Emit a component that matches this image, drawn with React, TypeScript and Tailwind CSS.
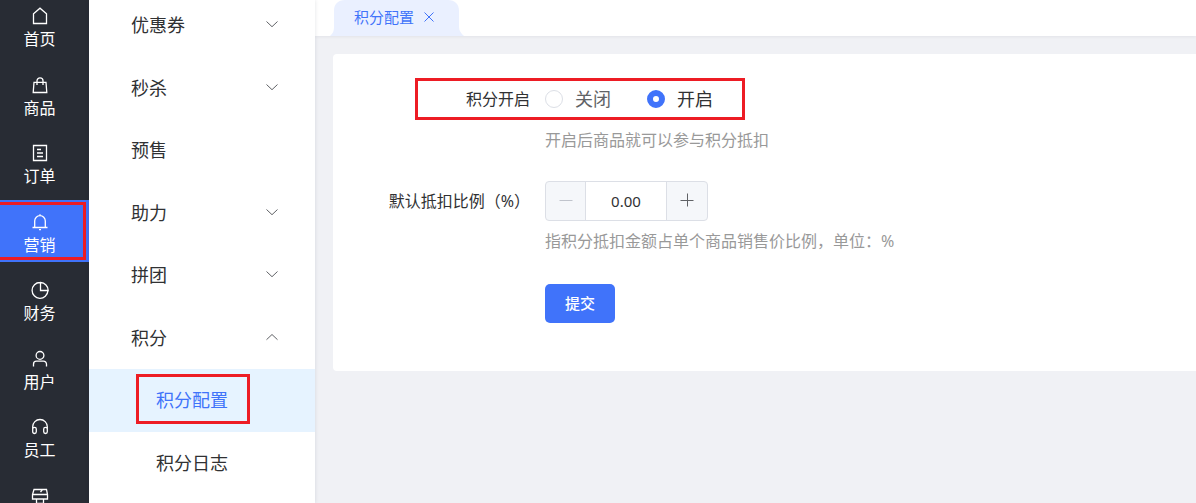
import { useState, type ReactNode } from 'react';

const railItems: { label: string; icon: ReactNode; iconOnly?: boolean }[] = [
  { label: '首页', icon: <path d="M2.500 16.500V6.800L9 1.200l6.500 5.600v9.700z" /> },
  { label: '商品', icon: <path d="M3 6.300h12l.8 10.200H2.200zM6 9V4.800a3 3 0 0 1 6 0V9" /> },
  { label: '订单', icon: <path d="M2.500 1.500h13v15h-13zM6 5.500h4M6 9h6M6 12.500h6" /> },
  { label: '营销', icon: <path d="M1.500 14.500h15M3.700 14.500V8a5.300 5.300 0 0 1 10.600 0v6.500M9 2.700V1.200M8 16.600h2" /> },
  { label: '财务', icon: <path d="M9 1.500a7.900 7.900 0 1 0 7.900 8.400M9.500 1.500v8h7.700a8 8 0 0 0-7.700-8z" /> },
  { label: '用户', icon: <path d="M9 1.500a3.900 3.900 0 1 1 0 7.800 3.900 3.900 0 0 1 0-7.800zM2.500 16.500v-2.300a3 3 0 0 1 3-3h7a3 3 0 0 1 3 3v2.300" /> },
  { label: '员工', icon: <path d="M1.700 13V8.800a7.300 7.300 0 0 1 14.600 0V13M3.500 9.300a1.800 1.800 0 0 1 1.800 1.800v2.600a1.800 1.800 0 0 1-3.600 0v-2.600a1.800 1.800 0 0 1 1.800-1.800zM14.500 9.300a1.800 1.800 0 0 1 1.800 1.800v2.600a1.800 1.800 0 0 1-3.600 0v-2.600a1.800 1.800 0 0 1 1.800-1.800z" /> },
  { label: '店铺', iconOnly: true, icon: <path d="M3 2.500h12.500l1 5v4.500h-15V7.500zM1.500 7.500h15M9.500 5l2-2.500M5.500 12v4.500h7V12" /> },
];

const menuItems: { label: string; arrow?: 'down' | 'up'; child?: boolean; active?: boolean }[] = [
  { label: '优惠券', arrow: 'down' },
  { label: '秒杀', arrow: 'down' },
  { label: '预售' },
  { label: '助力', arrow: 'down' },
  { label: '拼团', arrow: 'down' },
  { label: '积分', arrow: 'up' },
  { label: '积分配置', child: true, active: true },
  { label: '积分日志', child: true },
];

function Rail() {
  return (
    <nav className="w-[89px] shrink-0 overflow-hidden bg-[#282c34]">
      <ul className="-mt-[9px] grid h-[548px] grid-rows-8">
        {railItems.map(({ label, icon, iconOnly }) => {
          const active = label === '营销';
          return (
            <li key={label} className="flex items-center">
              <a
                href="#"
                aria-label={iconOnly ? label : undefined}
                className={`relative flex h-[62px] w-full flex-col items-center pt-[13px] pr-[10px] text-base leading-6 text-white ${active ? 'bg-[#4073fa]' : ''}`}
              >
                <svg viewBox="0 0 18 18" className="mb-[2px] h-[18px] w-[18px] shrink-0 fill-none stroke-white stroke-[1.300]">
                  {icon}
                </svg>
                {!iconOnly && label}
                {active && <span className="absolute top-[2px] right-[3px] bottom-[2px] -left-1 border-3 border-[#ed1c24]" />}
              </a>
            </li>
          );
        })}
      </ul>
    </nav>
  );
}

function Menu() {
  return (
    <nav className="z-10 w-[226px] shrink-0 overflow-hidden bg-white shadow-[0_0_4px_rgba(0,21,41,0.12)]">
      <ul className="-mt-[6px] grid h-[500px] grid-rows-8">
        {menuItems.map(({ label, arrow, child, active }) => (
          <li key={label} className="min-h-0">
            <a
              href="#"
              className={`flex h-full items-center justify-between pr-9 text-lg ${child ? 'pl-[67px]' : 'pl-[42px]'} ${active ? 'bg-[#e6f3ff] text-[#4073fa]' : 'text-[#303133]'}`}
            >
              <span className="relative">
                {label}
                {active && <span className="absolute -top-3 -right-[22px] -bottom-[10px] -left-5 border-3 border-[#ed1c24]" />}
              </span>
              {arrow && (
                <svg viewBox="0 0 14 14" className="mb-[2px] h-[14px] w-[14px] fill-none stroke-[#606266]">
                  <path d={arrow === 'down' ? 'M1.500 4.500 7 9.700l5.500-5.200' : 'M1.500 9.700 7 4.500l5.500 5.200'} />
                </svg>
              )}
            </a>
          </li>
        ))}
      </ul>
    </nav>
  );
}

const radioClass =
  'h-[18px] w-[18px] appearance-none rounded-full border border-[#dcdfe6] bg-white checked:border-[6px] checked:border-[#4073fa]';

export default function App() {
  const [enabled, setEnabled] = useState(true);
  const [ratio, setRatio] = useState(0);

  return (
    <div className="flex h-screen overflow-hidden bg-[#f0f1f5] font-['Noto_Sans','Noto_Sans_CJK_SC',sans-serif]">
      <Rail />
      <Menu />
      <main className="min-w-0 flex-1">
        <header className="flex h-9 bg-white pl-[15px] shadow-[0_1px_3px_rgba(0,21,41,0.06)]">
          <div className="relative flex h-full items-center pb-[2px]">
            <svg viewBox="0 0 134 36" preserveAspectRatio="none" className="absolute inset-0 h-full w-full fill-[#eaf0ff]">
              <path d="M0 36c3-3 4-5 4-9V11C4 4 8 0 15 0h103c7 0 11 4 11 11v16c0 4 2 6 5 9z" />
            </svg>
            <a href="#" className="relative pl-6 text-[15px] text-[#4073fa]">积分配置</a>
            <button type="button" aria-label="关闭标签" className="relative mr-[29px] ml-[9px]">
              <svg viewBox="0 0 12 12" className="h-3 w-3 fill-none stroke-[#4073fa]">
                <path d="m1.500 1.500 9 9m0-9-9 9" />
              </svg>
            </button>
          </div>
        </header>

        <form
          onSubmit={(e) => e.preventDefault()}
          className="mt-[18px] ml-[18px] grid grid-cols-[197px_1fr] gap-x-[15px] rounded-l-[4px] bg-white pt-6 pb-12 text-base text-[#303133]"
        >
          <span id="points-label" className="text-right leading-[42px]">积分开启</span>
          <div role="radiogroup" aria-labelledby="points-label" className="relative flex h-[42px] items-center gap-9 text-lg">
            <label className="flex items-center gap-3 text-[#606266]">
              <input type="radio" name="points" checked={!enabled} onChange={() => setEnabled(false)} className={radioClass} />
              关闭
            </label>
            <label className="flex items-center gap-3">
              <input type="radio" name="points" checked={enabled} onChange={() => setEnabled(true)} className={radioClass} />
              开启
            </label>
            <span className="pointer-events-none absolute inset-y-0 -left-[130px] w-[330px] border-3 border-[#ed1c24]" />
          </div>

          <p className="col-start-2 mt-2 leading-6 text-[#999999]">开启后商品就可以参与积分抵扣</p>

          <label htmlFor="ratio" className="mt-[29px] text-right leading-10 whitespace-nowrap">默认抵扣比例（%）</label>
          <div className="mt-[29px] flex h-10 w-[163px] overflow-hidden rounded-[4px] border border-[#dcdfe6] bg-[#f5f7fa]">
            <button type="button" aria-label="减少" onClick={() => setRatio(Math.max(0, ratio - 1))} className="flex w-10 shrink-0 items-center justify-center border-r border-[#dcdfe6] pb-[2px]">
              <svg viewBox="0 0 14 14" className="h-[14px] w-[14px] fill-none stroke-[#c0c4cc]"><path d="M.5 7.500h13" /></svg>
            </button>
            <input id="ratio" value={ratio.toFixed(2)} onChange={(e) => setRatio(Number(e.target.value) || 0)} className="min-w-0 flex-1 bg-white text-center text-[15px] text-[#303133]" />
            <button type="button" aria-label="增加" onClick={() => setRatio(ratio + 1)} className="flex w-[41px] shrink-0 items-center justify-center border-l border-[#dcdfe6] pb-[2px]">
              <svg viewBox="0 0 14 14" className="h-[14px] w-[14px] fill-none stroke-[#606266]"><path d="M.5 7.500h13M7.500.5v13" /></svg>
            </button>
          </div>

          <p className="col-start-2 mt-2 leading-6 text-[#999999]">指积分抵扣金额占单个商品销售价比例，单位：%</p>

          <div className="col-start-2 mt-[31px]">
            <button type="submit" className="h-[39px] rounded-[5px] bg-[#4073fa] px-5 text-[15px] font-medium text-white">提交</button>
          </div>
        </form>
      </main>
    </div>
  );
}
